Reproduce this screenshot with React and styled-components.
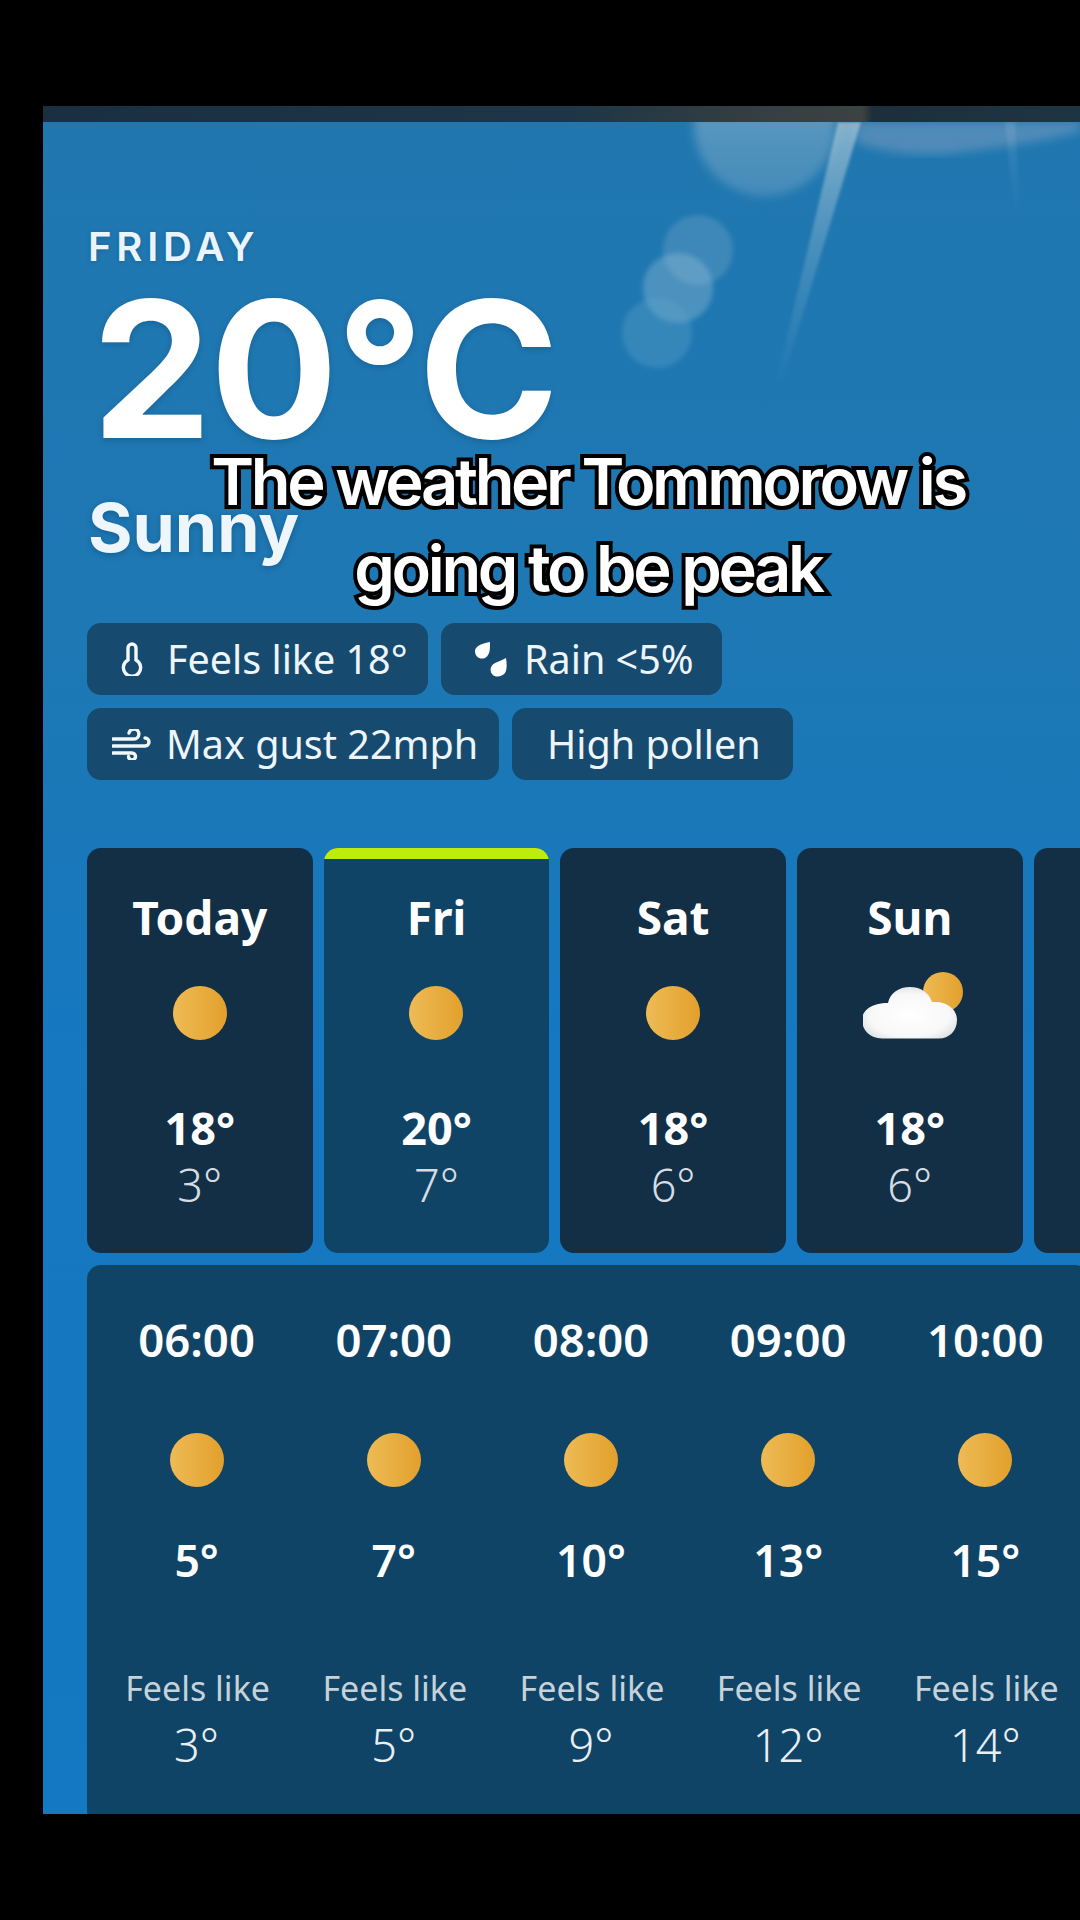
import React from "react";
import styled, { createGlobalStyle } from "styled-components";

const Global = createGlobalStyle`
  html, body { margin: 0; padding: 0; background: #000; }
  body { width: 1080px; height: 1920px; overflow: hidden; font-family: "Noto Sans", "Open Sans", sans-serif; color: #fff; }
`;

const Screen = styled.main`
  position: relative;
  margin: 106px 0 0 43px;
  width: 1037px;
  height: 1708px;
  overflow: hidden;
  background: linear-gradient(180deg, #2077b0 0%, #1e78b3 30%, #1578c0 55%, #1478c2 100%);
`;

const StatusStrip = styled.div`
  height: 16px;
  background: linear-gradient(90deg, #1a3040 0%, #1d3546 50%, #343e42 68%, #3d4242 79%, #1c2f3b 80%, #1f3443 100%);
`;

const Flare = styled.svg`
  position: absolute;
  left: 0;
  top: 16px;
  pointer-events: none;
`;

const Content = styled.div`
  position: relative;
  padding: 0 0 0 44px;
  display: flex;
  flex-direction: column;
`;

const Day = styled.div`
  margin: 105px 0 0 1px;
  height: 40px;
  font-family: "Inter", sans-serif;
  font-weight: 600;
  font-size: 40px;
  line-height: 40px;
  letter-spacing: 4.8px;
  color: #eaf4fa;
  text-shadow: 0 1px 4px rgba(0, 40, 80, 0.25);
`;

const BigTemp = styled.div`
  margin: 12px 0 0 5px;
  height: 180px;
  font-family: "Inter", sans-serif;
  font-weight: 700;
  font-size: 190px;
  line-height: 180px;
  letter-spacing: -1.8px;
  text-shadow: 0 2px 6px rgba(0, 40, 80, 0.25);
`;

const Summary = styled.div`
  margin: 33px 0 0 1px;
  height: 70px;
  font-family: "Inter", sans-serif;
  font-weight: 700;
  font-size: 68px;
  line-height: 70px;
  color: #eef6fb;
  text-shadow: 0 2px 6px rgba(0, 40, 80, 0.3);
`;

const Chips = styled.div`
  margin-top: 61px;
  display: flex;
  flex-direction: column;
  gap: 13px;
`;

const ChipRow = styled.div`
  display: flex;
  gap: 13px;
`;

const Chip = styled.div`
  height: 72px;
  width: ${(p) => p.$w}px;
  box-sizing: border-box;
  padding-left: ${(p) => p.$pad}px;
  display: flex;
  align-items: center;
  gap: ${(p) => p.$gap || 0}px;
  border-radius: 14px;
  background: #164a6f;
  font-size: 39.5px;
  white-space: nowrap;
  color: #eef5fa;
`;

const DayStrip = styled.div`
  margin-top: 68px;
  display: flex;
  gap: 11.2px;
  height: 405px;
`;

const DayCard = styled.div`
  position: relative;
  flex: 0 0 225.5px;
  border-radius: 14px;
  overflow: hidden;
  background: ${(p) => (p.$active ? "#104467" : "#122f45")};
  display: flex;
  flex-direction: column;
  align-items: center;
  ${(p) => p.$active && "&::before { content: ''; position: absolute; left: 0; right: 0; top: 0; height: 11px; background: #bfec0c; }"}
`;

const DayName = styled.div`
  margin-top: 44px;
  height: 50px;
  font-size: 46px;
  line-height: 50px;
  font-weight: 700;
`;

const DayIcon = styled.div`
  margin-top: 36px;
  height: 70px;
  display: flex;
  align-items: center;
  justify-content: center;
`;

const DayHigh = styled.div`
  margin-top: 55px;
  height: 50px;
  font-size: 45px;
  line-height: 50px;
  font-weight: 700;
`;

const DayLow = styled.div`
  margin-top: 7px;
  height: 50px;
  font-size: 45px;
  line-height: 50px;
  font-weight: 300;
  color: #d5dde3;
`;

const Hourly = styled.div`
  margin-top: 12px;
  width: 991px;
  height: 560px;
  border-radius: 14px;
  background: #104467;
  display: grid;
  grid-template-columns: repeat(5, 197.2px);
  padding-left: 11px;
`;

const HourCol = styled.div`
  display: flex;
  flex-direction: column;
  align-items: center;
`;

const HourTime = styled.div`
  margin-top: 49px;
  height: 50px;
  font-size: 45.5px;
  line-height: 50px;
  font-weight: 600;
`;

const HourIcon = styled.div`
  margin-top: 66px;
  height: 60px;
  display: flex;
  align-items: center;
  justify-content: center;
`;

const HourTemp = styled.div`
  margin-top: 45px;
  height: 50px;
  font-size: 44.5px;
  line-height: 50px;
  font-weight: 600;
`;

const FeelsLabel = styled.div`
  margin: 81px 0 0 2px;
  height: 44px;
  font-size: 34px;
  line-height: 44px;
  color: #c6d2da;
`;

const FeelsValue = styled.div`
  margin-top: 10px;
  height: 50px;
  font-size: 45px;
  line-height: 50px;
  font-weight: 300;
  color: #e8eef2;
`;

const Caption = styled.div`
  position: absolute;
  left: 0;
  width: 1090px;
  top: 332px;
  text-align: center;
  font-family: "Inter", sans-serif;
  font-weight: 600;
  font-size: 65px;
  line-height: 87px;
  letter-spacing: -3.4px;
  color: #fff;
  -webkit-text-stroke: 8px #000;
  paint-order: stroke fill;
`;

const CloudIcon = styled.svg`
  margin: 0 0 15px 6px;
`;

const Sun = ({ size = 54 }) => (
  <svg width={size} height={size} viewBox="0 0 54 54">
    <defs>
      <linearGradient id="sunGrad" x1="0" x2="1" y1="0" y2="0">
        <stop offset="0" stopColor="#eebb55" />
        <stop offset="1" stopColor="#e2a02c" />
      </linearGradient>
    </defs>
    <circle cx="27" cy="27" r="27" fill="url(#sunGrad)" />
  </svg>
);

const PartlyCloudy = () => (
  <CloudIcon width="100" height="67" viewBox="0 0 100 67">
    <defs>
      <radialGradient id="cloudGrad" cx="0.5" cy="0.55" r="0.6">
        <stop offset="0" stopColor="#ffffff" />
        <stop offset="0.7" stopColor="#f8f8f8" />
        <stop offset="1" stopColor="#d9dde0" />
      </radialGradient>
      <filter id="cloudSoft"><feGaussianBlur stdDeviation="0.7" /></filter>
    </defs>
    <circle cx="80" cy="20" r="20" fill="url(#sunGrad)" />
    <path
      d="M19 66.5 C7 66.5 -1 58 -1 48 C-1 38 9 31 25 31 C27 21 36 15 47 15 C58 15 66 21 69 30 C84 29 94 37 94 48 C94 59 86 66.5 76 66.5 Z"
      fill="url(#cloudGrad)"
      filter="url(#cloudSoft)"
    />
  </CloudIcon>
);

const Thermometer = () => (
  <svg width="22" height="34" viewBox="0 0 22 34" fill="none" stroke="#f2f7fa" strokeWidth="3.4">
    <path d="M7 18 V6 a4 4 0 0 1 8 0 V18 a8.6 8.6 0 1 1 -8 0 Z" />
  </svg>
);

const Drops = () => (
  <svg width="33" height="35" viewBox="0 0 33 35" fill="#fff">
    <path d="M16 0 C16 6 16.5 13 11 16 C6 18 1 15 1 9 C1 4 9 1 16 0 Z" />
    <path d="M32 16 C33 22 33 28 31 31 C28 35 21 36 18 32 C15 28 17 23 21 21 C25 19 29 18 32 16 Z" />
  </svg>
);

const Wind = () => (
  <svg width="40" height="31" viewBox="0 0 40 31" fill="none" stroke="#f2f7fa" strokeWidth="3.4" strokeLinecap="round">
    <path d="M1 10 H22 a5 5 0 1 0 -5 -6" />
    <path d="M1 17 H33 a4 4 0 0 0 0 -8" />
    <path d="M1 24 H20 a3.5 3.5 0 1 1 -3.5 3.5" />
  </svg>
);

const days = [
  { name: "Today", high: "18°", low: "3°" },
  { name: "Fri", high: "20°", low: "7°", active: true },
  { name: "Sat", high: "18°", low: "6°" },
  { name: "Sun", high: "18°", low: "6°", cloud: true },
  { name: "", high: "", low: "" },
];

const hours = [
  { t: "06:00", temp: "5°", feels: "3°" },
  { t: "07:00", temp: "7°", feels: "5°" },
  { t: "08:00", temp: "10°", feels: "9°" },
  { t: "09:00", temp: "13°", feels: "12°" },
  { t: "10:00", temp: "15°", feels: "14°" },
];

export default function App() {
  return (
    <>
      <Global />
      <Screen>
        <StatusStrip />
        <Flare width="1037" height="360" viewBox="0 0 1037 360">
          <defs>
            <filter id="soft"><feGaussianBlur stdDeviation="2.5" /></filter>
            <filter id="softer"><feGaussianBlur stdDeviation="5" /></filter>
            <filter id="ray"><feGaussianBlur stdDeviation="1.8" /></filter>
            <linearGradient id="rayGrad" x1="0" x2="0" y1="0" y2="1">
              <stop offset="0" stopColor="#c8d8de" stopOpacity="0.6" />
              <stop offset="0.5" stopColor="#a9c8da" stopOpacity="0.28" />
              <stop offset="1" stopColor="#8fb9d4" stopOpacity="0" />
            </linearGradient>
            <linearGradient id="diskGrad" x1="0" x2="0" y1="0" y2="1">
              <stop offset="0" stopColor="#a9c5d6" stopOpacity="0.55" />
              <stop offset="1" stopColor="#86aecb" stopOpacity="0.36" />
            </linearGradient>
          </defs>
          <circle cx="722" cy="3" r="71" fill="url(#diskGrad)" filter="url(#softer)" />
          <path d="M815 0 L1037 0 L1037 10 Q 980 24 900 32 Q 850 34 812 20 Z" fill="#8aa4c4" opacity="0.45" filter="url(#softer)" />
          <polygon points="795,0 818,0 739,261 733,261" fill="url(#rayGrad)" filter="url(#ray)" />
          <polygon points="962,0 972,0 978,100 972,100" fill="url(#rayGrad)" opacity="0.25" filter="url(#ray)" />
          <circle cx="655" cy="128" r="35" fill="#84b0cc" opacity="0.3" filter="url(#soft)" />
          <circle cx="635" cy="166" r="35" fill="#a0c4da" opacity="0.35" filter="url(#soft)" />
          <circle cx="614" cy="211" r="35" fill="#5fa5cc" opacity="0.35" filter="url(#soft)" />
        </Flare>
        <Content>
          <Day>FRIDAY</Day>
          <BigTemp>20°C</BigTemp>
          <Summary>Sunny</Summary>
          <Chips>
            <ChipRow>
              <Chip $w={341} $pad={34} $gap={24}><Thermometer />Feels like 18°</Chip>
              <Chip $w={281} $pad={33} $gap={17}><Drops />Rain &lt;5%</Chip>
            </ChipRow>
            <ChipRow>
              <Chip $w={412} $pad={25} $gap={14}><Wind />Max gust 22mph</Chip>
              <Chip $w={281} $pad={35}>High pollen</Chip>
            </ChipRow>
          </Chips>
          <DayStrip>
            {days.map((d, i) => (
              <DayCard key={i} $active={d.active}>
                <DayName>{d.name}</DayName>
                {d.name && <DayIcon>{d.cloud ? <PartlyCloudy /> : <Sun />}</DayIcon>}
                <DayHigh>{d.high}</DayHigh>
                <DayLow>{d.low}</DayLow>
              </DayCard>
            ))}
          </DayStrip>
          <Hourly>
            {hours.map((h) => (
              <HourCol key={h.t}>
                <HourTime>{h.t}</HourTime>
                <HourIcon><Sun /></HourIcon>
                <HourTemp>{h.temp}</HourTemp>
                <FeelsLabel>Feels like</FeelsLabel>
                <FeelsValue>{h.feels}</FeelsValue>
              </HourCol>
            ))}
          </Hourly>
        </Content>
        <Caption>The weather Tommorow is<br />going to be peak</Caption>
      </Screen>
    </>
  );
}
